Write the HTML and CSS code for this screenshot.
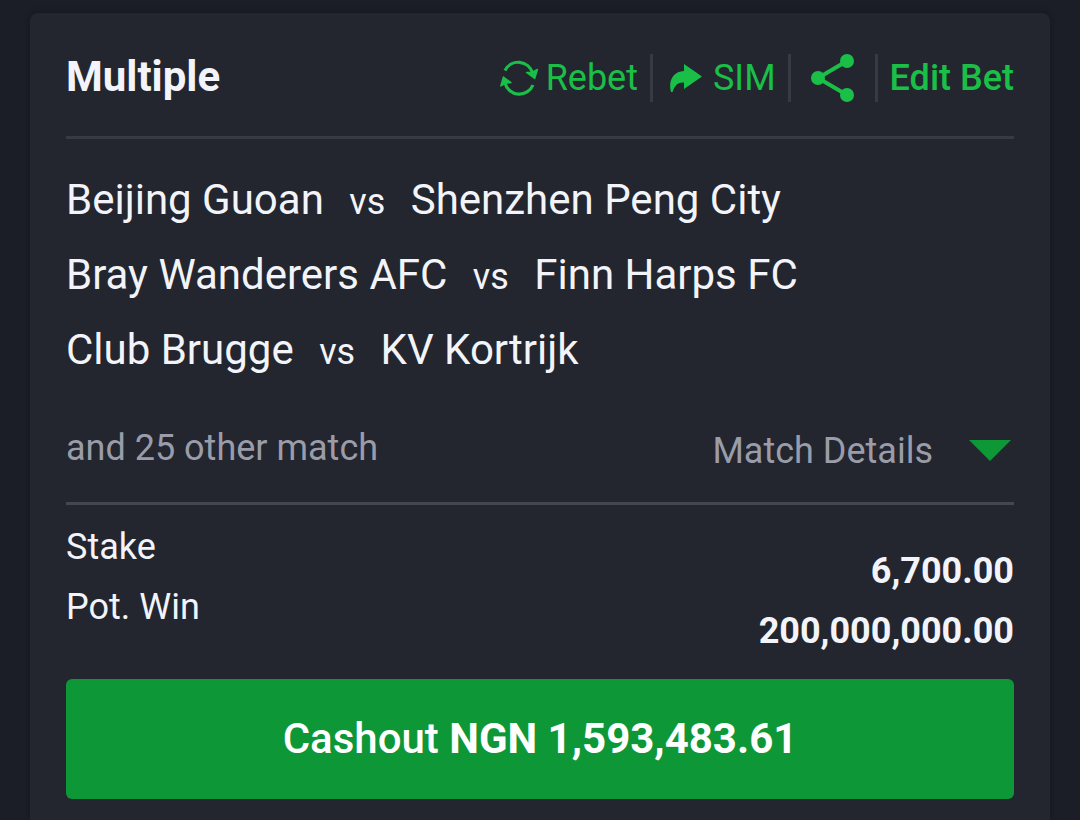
FILE: index.html
```html
<!DOCTYPE html>
<html lang="en">
<head>
    <meta charset="UTF-8">
    <meta name="viewport" content="width=device-width, initial-scale=1.0">
    <title>Bet Details</title>
    <link rel="stylesheet" href="styles.css">
</head>
<body>

<main class="bet-card">
    <header class="bet-header">
        <h1>Multiple</h1>
        <nav class="actions">
            <button type="button" class="action rebet">
                <svg width="40" height="40" viewBox="0 0 40 40" aria-hidden="true">
                    <path d="M5 12.5A14.8 14.8 0 0 1 32.5 15" fill="none" stroke="currentColor" stroke-width="3.2"/>
                    <path d="M26.5 14.5L31.5 14.5L37.5 11.5L34.7 20.5Z" fill="currentColor" stroke="currentColor" stroke-width="1.4" stroke-linejoin="round"/>
                    <path d="M33 27A14.8 14.8 0 0 1 5 25" fill="none" stroke="currentColor" stroke-width="3.2"/>
                    <path d="M11 24.5L6 25.2L0.8 28L3.4 19Z" fill="currentColor" stroke="currentColor" stroke-width="1.4" stroke-linejoin="round"/>
                </svg>
                Rebet
            </button>
            <button type="button" class="action sim">
                <svg width="33" height="30" viewBox="0 0 33 30" aria-hidden="true">
                    <path d="M15 1L33 13.5L15 26V19.5C9 19 6 22 3.5 29H2C-1 18 4 8.500 15 8Z" fill="currentColor"/>
                </svg>
                SIM
            </button>
            <button type="button" class="action share" aria-label="Share">
                <svg width="44" height="48" viewBox="0 0 44 48" aria-hidden="true">
                    <path d="M36 7L7 24L36 41" fill="none" stroke="currentColor" stroke-width="4"/>
                    <circle cx="36" cy="7" r="7" fill="currentColor"/>
                    <circle cx="7" cy="24" r="7" fill="currentColor"/>
                    <circle cx="36" cy="41" r="7" fill="currentColor"/>
                </svg>
            </button>
            <button type="button" class="action edit">Edit Bet</button>
        </nav>
    </header>

    <section class="matches">
        <ul>
            <li>Beijing Guoan <span class="vs">vs</span> Shenzhen Peng City</li>
            <li>Bray Wanderers AFC <span class="vs">vs</span> Finn Harps FC</li>
            <li>Club Brugge <span class="vs">vs</span> KV Kortrijk</li>
        </ul>
        <div class="more">
            <span>and 25 other match</span>
            <button type="button" class="details">
                Match Details
                <svg width="42" height="22" viewBox="0 0 42 22" aria-hidden="true">
                    <path d="M0 0H42L21 21Z" fill="#0e9737"/>
                </svg>
            </button>
        </div>
    </section>

    <dl class="totals">
        <div class="total-row">
            <dt>Stake</dt>
            <dd>6,700.00</dd>
        </div>
        <div class="total-row">
            <dt>Pot. Win</dt>
            <dd>200,000,000.00</dd>
        </div>
    </dl>

    <button type="button" class="cashout">Cashout <b>NGN 1,593,483.61</b></button>
</main>

</body>
</html>
```

FILE: styles.css
```css
* {
    box-sizing: border-box;
}
body {
    font-family: Roboto, sans-serif;
    font-size: 36px;
    margin: 0;
    padding: 13px 30px 0;
    background-color: #1b1e26;
    color: #f2f4f9;
}
button {
    font: inherit;
    color: inherit;
    background: none;
    border: none;
    padding: 0;
    cursor: pointer;
}
.bet-card {
    min-height: calc(100vh - 13px);
    padding: 0 36px 21px;
    background-color: #23262f;
    border-radius: 8px 8px 0 0;
    box-shadow: 0 0 6px rgba(0, 0, 0, 0.3);
}
.bet-header {
    display: flex;
    justify-content: space-between;
    align-items: flex-start;
    padding: 41px 0 34px;
    border-bottom: 3px solid #373a43;
}
.bet-header h1 {
    margin: 0;
    font-size: 42px;
    line-height: 46px;
    font-weight: 700;
}
.actions {
    display: flex;
    color: #1abf48;
}
.action {
    display: flex;
    align-items: center;
    height: 48px;
    line-height: 48px;
}
.action + .action {
    border-left: 3px solid #373a43;
}
.action svg {
    display: block;
}
.rebet {
    gap: 6px;
    padding-right: 12px;
}
.sim {
    gap: 11px;
    padding: 0 12px 0 16px;
}
.share {
    padding: 0 20px;
}
.edit {
    padding-left: 12px;
    font-weight: 500;
}
.matches {
    padding-top: 23px;
    border-bottom: 3px solid #444751;
}
.matches ul {
    list-style: none;
    margin: 0;
    padding: 0;
    font-size: 42px;
    line-height: 75px;
}
.vs {
    margin: 0 15px;
    font-size: 36px;
    line-height: 1;
}
.more {
    display: flex;
    justify-content: space-between;
    padding: 37px 0 27px;
    line-height: 48px;
    color: #9a9da9;
}
.details {
    display: flex;
    align-items: center;
    gap: 36px;
    padding: 3px 3px 0 0;
}
.totals {
    margin: 0;
    padding: 12px 0 18px;
    line-height: 60px;
}
.total-row {
    display: flex;
    justify-content: space-between;
}
.total-row dt {
    height: 60px;
}
.total-row dd {
    height: 60px;
    margin: 0;
    padding-top: 24px;
    font-weight: 700;
}
.total-row:last-child dd {
    height: auto;
}
.cashout {
    display: block;
    width: 100%;
    height: 120px;
    padding-bottom: 2px;
    font-size: 42px;
    font-weight: 500;
    color: white;
    background-color: #0e9737;
    border-radius: 6px;
}
.cashout b {
    font-weight: 700;
}
```
